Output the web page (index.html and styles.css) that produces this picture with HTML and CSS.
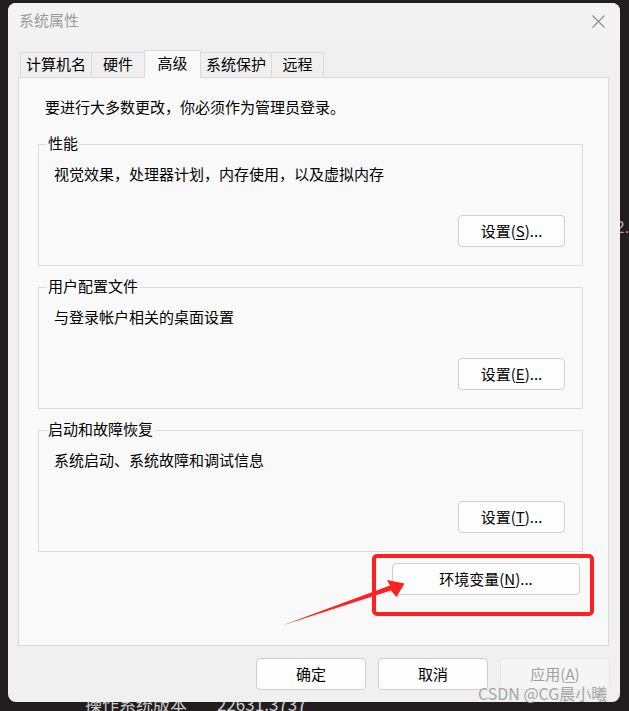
FILE: index.html
```html
<!DOCTYPE html>
<html lang="zh-CN">
<head>
<meta charset="utf-8">
<title>系统属性</title>
<link rel="stylesheet" href="styles.css">
</head>
<body>
<div class="window">
  <div class="titlebar">
    <span class="title">系统属性</span>
    <svg class="close" width="13" height="13" viewBox="0 0 13 13"><path d="M0.5 0.5 L12.5 12.5 M12.5 0.5 L0.5 12.5" stroke="#8c8c8c" stroke-width="1.1" fill="none"/></svg>
  </div>
  <div class="content">
    <div class="tabs">
      <div class="tab w4">计算机名</div>
      <div class="tab w2">硬件</div>
      <div class="tab active">高级</div>
      <div class="tab w4b">系统保护</div>
      <div class="tab w2b">远程</div>
    </div>
    <div class="panel">
      <p class="note">要进行大多数更改，你必须作为管理员登录。</p>
      <fieldset class="group">
        <legend>性能</legend>
        <p class="desc">视觉效果，处理器计划，内存使用，以及虚拟内存</p>
        <div class="btnrow"><button class="btn">设置(<u>S</u>)...</button></div>
      </fieldset>
      <fieldset class="group">
        <legend>用户配置文件</legend>
        <p class="desc">与登录帐户相关的桌面设置</p>
        <div class="btnrow"><button class="btn">设置(<u>E</u>)...</button></div>
      </fieldset>
      <fieldset class="group">
        <legend>启动和故障恢复</legend>
        <p class="desc">系统启动、系统故障和调试信息</p>
        <div class="btnrow"><button class="btn">设置(<u>T</u>)...</button></div>
      </fieldset>
      <div class="envrow"><button class="btn env">环境变量(<u>N</u>)...</button></div>
    </div>
    <div class="footer">
      <button class="btn foot">确定</button>
      <button class="btn foot">取消</button>
      <button class="btn foot disabled">应用(<u>A</u>)</button>
    </div>
  </div>
</div>
<div class="bgtext"><span>操作系统版本</span><span>22631.3737</span></div>
<div class="edge-num">2.</div>
<div class="watermark">CSDN @CG晨小曦</div>
<svg class="annot" width="629" height="711" viewBox="0 0 629 711">
  <rect x="374" y="556" width="218" height="58" rx="3" ry="3" fill="none" stroke="#ff2020" stroke-width="4"/>
  <polygon points="282,625.5 391,590.5 396.5,597 404.5,583.5 387,580 390,585.5" fill="#ff2020"/>
</svg>
</body>
</html>
```

FILE: styles.css
```css
* { box-sizing: border-box; }

html, body {
  margin: 0;
  padding: 0;
}

body {
  width: 629px;
  height: 711px;
  overflow: hidden;
  background: #221e20;
  position: relative;
  font-family: "Noto Sans CJK SC", "Microsoft YaHei", "Liberation Sans", sans-serif;
  font-size: 15px;
  color: #000;
}

.window {
  position: relative;
  z-index: 1;
  margin: 3px 0 0 8px;
  width: 612px;
  height: 699px;
  background: #f0f0f0;
  border-radius: 8px;
  overflow: hidden;
}

.titlebar {
  height: 37px;
  background: #f3f3f3;
  display: flex;
  align-items: center;
  justify-content: space-between;
  padding: 0 15px 0 11px;
}

.title {
  color: #9a9a9a;
  font-size: 15px;
  line-height: 20px;
  margin-bottom: 3px;
}

.close { display: block; }

.content {
  padding: 0 11px 0 10px;
}

.tabs {
  height: 37px;
  display: flex;
  align-items: flex-end;
  padding-left: 2px;
}

.tab {
  height: 25px;
  border: 1px solid #dadada;
  border-bottom: none;
  background: #f0f0f0;
  display: flex;
  align-items: center;
  justify-content: center;
  line-height: 20px;
  margin-left: -1px;
  padding-bottom: 2px;
}

.tab:first-child { margin-left: 0; }

.w4 { width: 72px; }
.w2 { width: 54px; }
.w4b { width: 72px; }
.w2b { width: 53px; }

.tab.active {
  width: 57px;
  height: 28px;
  margin-bottom: -1px;
  background: #f9f9f9;
  position: relative;
  z-index: 2;
  padding-bottom: 3px;
}

.panel {
  height: 569px;
  border: 1px solid #d9d9d9;
  background: #f9f9f9;
  padding: 19px 25px 0 19px;
}

.note {
  margin: 0 0 17px 7px;
  line-height: 20px;
}

.group {
  margin: 0 0 11px 0;
  padding: 10px 17px 18px 15px;
  border: 1px solid #dcdcdc;
  min-width: 0;
}

.group legend {
  margin-left: -7px;
  padding: 0 1px;
  line-height: 20px;
  font-size: 15px;
  position: relative;
  top: -1px;
}

.desc {
  margin: 0;
  line-height: 20px;
}

.btnrow {
  display: flex;
  justify-content: flex-end;
  margin-top: 31px;
}

.btn {
  font-family: inherit;
  font-size: 15px;
  color: #000;
  background: #fdfdfd;
  border: 1px solid #d0d0d0;
  border-radius: 4px;
  width: 107px;
  height: 32px;
  padding: 0 0 1px 0;
  line-height: 20px;
}

.btn u { text-underline-offset: 2px; }

.envrow {
  display: flex;
  justify-content: flex-end;
  margin-top: 8px;
  padding-right: 3px;
}

.btn.env {
  width: 188px;
  height: 32px;
}

.footer {
  display: flex;
  justify-content: flex-end;
  gap: 12px;
  padding-top: 12px;
  margin-right: -1px;
}

.btn.foot {
  width: 110px;
  height: 32px;
}

.btn.disabled {
  color: #a0a0a0;
  background: #f5f5f5;
  border-color: #e6e6e6;
}

.bgtext {
  position: absolute;
  left: 85px;
  top: 693px;
  z-index: 0;
  color: #cfcfcf;
  font-size: 17px;
  line-height: 22px;
  display: flex;
  gap: 30px;
}

.edge-num {
  position: absolute;
  left: 615px;
  top: 217px;
  z-index: 0;
  color: #a9a9a9;
  font-family: "Liberation Sans", sans-serif;
  font-size: 17px;
  line-height: 22px;
}

.watermark {
  position: absolute;
  left: 478px;
  top: 682px;
  z-index: 2;
  color: rgba(160, 160, 160, 0.95);
  font-size: 16px;
  line-height: 22px;
  white-space: nowrap;
}

.annot {
  position: absolute;
  left: 0;
  top: 0;
  z-index: 3;
  pointer-events: none;
}
```
